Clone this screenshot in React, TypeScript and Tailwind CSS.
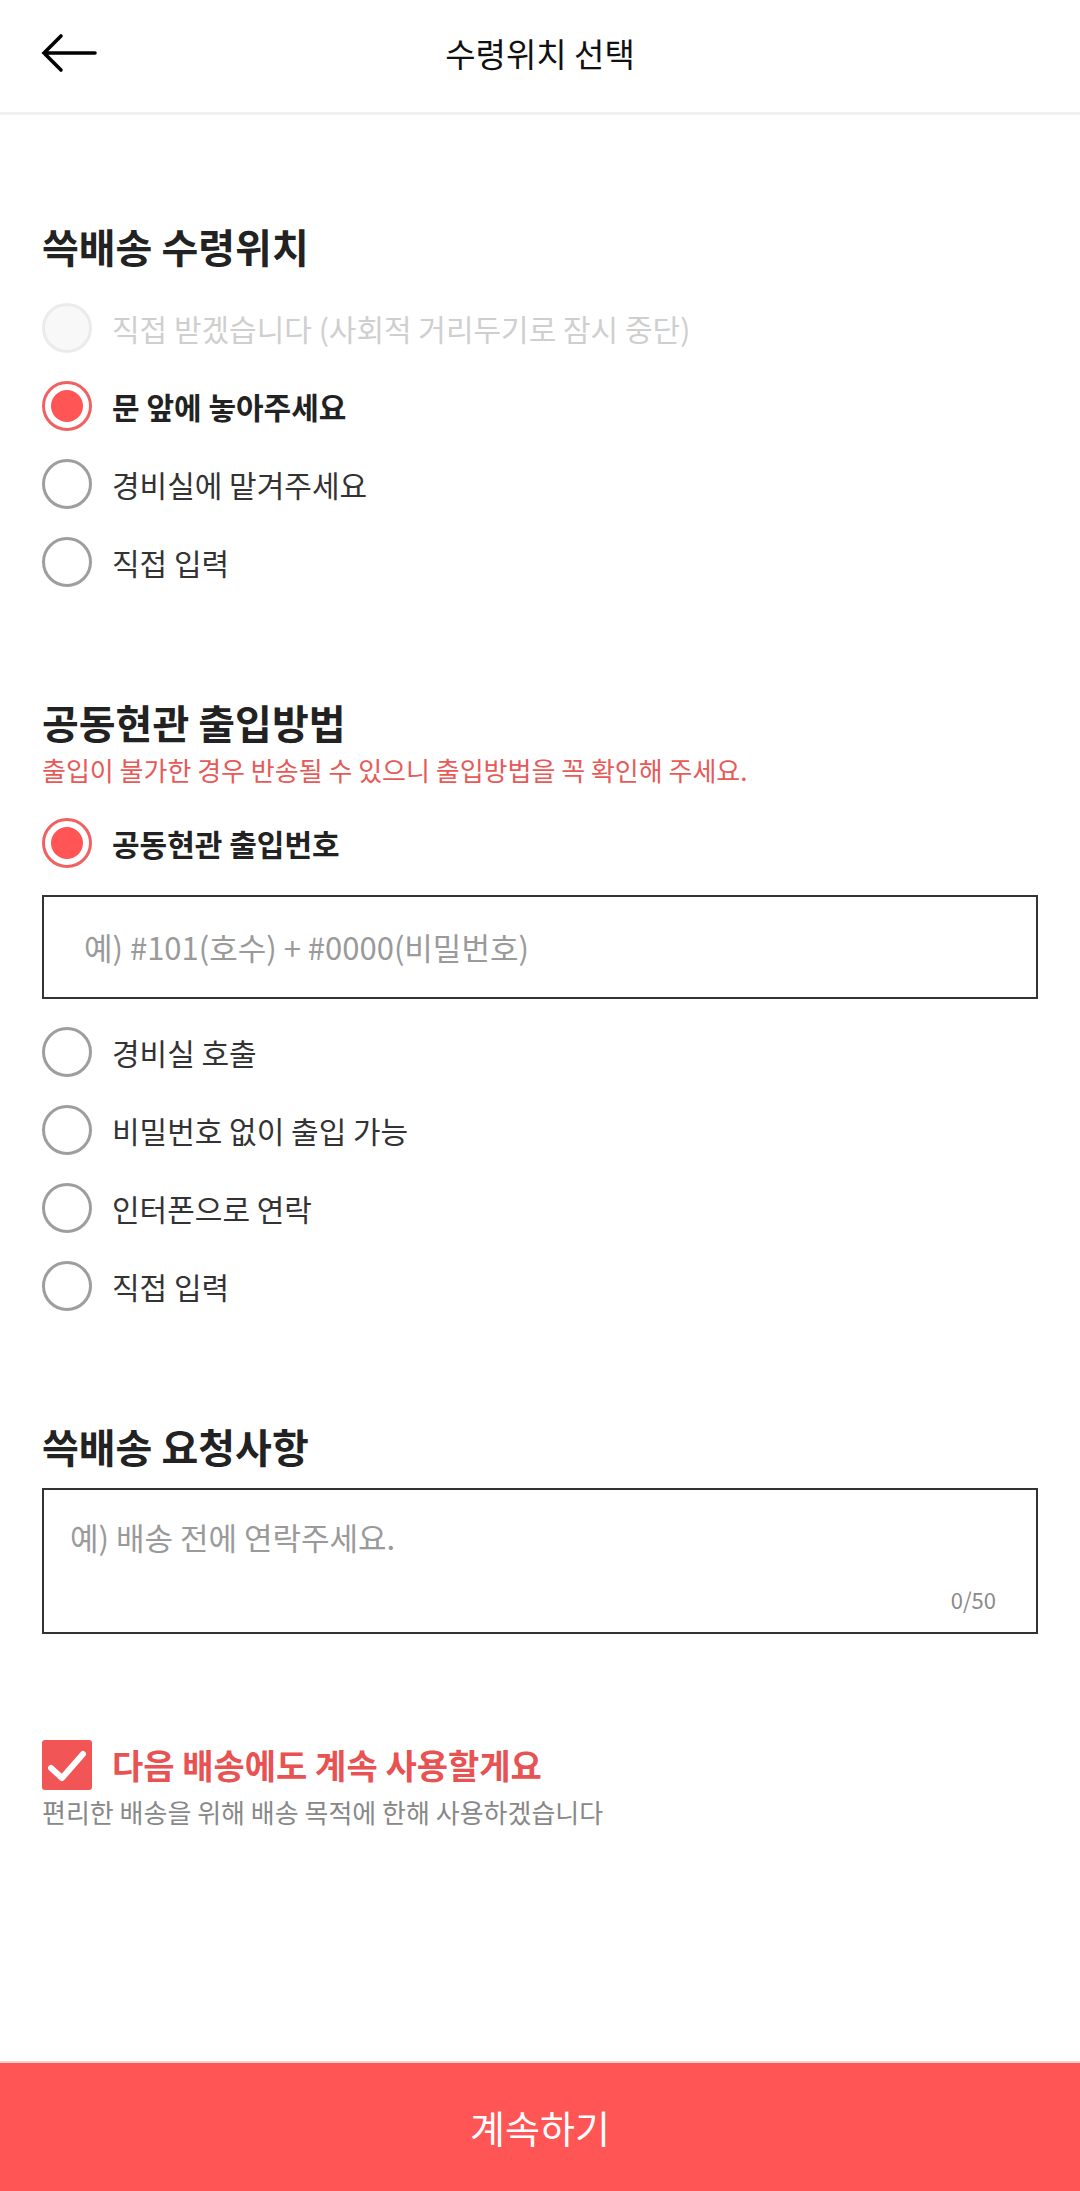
import React from "react";

type RadioState = "selected" | "unselected" | "disabled";

function Radio({ state }: { state: RadioState }) {
  if (state === "selected") {
    return (
      <span className="w-[50px] h-[50px] rounded-full border-[3px] border-[#f06262] flex items-center justify-center shrink-0">
        <span className="w-[32px] h-[32px] rounded-full bg-[#ff5555]" />
      </span>
    );
  }
  if (state === "disabled") {
    return <span className="w-[50px] h-[50px] rounded-full border-[3px] border-[#ebebeb] bg-[#f8f8f8] shrink-0" />;
  }
  return <span className="w-[50px] h-[50px] rounded-full border-[3px] border-[#9e9e9e] bg-white shrink-0" />;
}

function Option({ label, state }: { label: string; state: RadioState }) {
  const textCls =
    state === "selected"
      ? "text-[#222222] font-bold"
      : state === "disabled"
      ? "text-[#cfcfcf]"
      : "text-[#333333]";
  return (
    <div className="h-[78px] flex items-center gap-[20px]">
      <Radio state={state} />
      <span className={`text-[30px] leading-[42px] ${textCls}`}>{label}</span>
    </div>
  );
}

export default function App() {
  return (
    <div
      className="w-full min-h-[2191px] flex flex-col bg-white"
      style={{ fontFamily: '"Noto Sans CJK KR", "Noto Sans", sans-serif' }}
    >
      {/* Header */}
      <header className="relative h-[115px] flex items-center justify-center border-b-[3px] border-[#f1f1f1] shrink-0">
        <button className="absolute left-[40px] top-[33px] w-[58px] h-[40px] flex items-center justify-center">
          <svg width="58" height="40" viewBox="0 0 58 40" fill="none">
            <path d="M55 20 H4 M21 3 L4 20 L21 37" stroke="#000" strokeWidth="3.6" strokeLinecap="round" strokeLinejoin="miter" />
          </svg>
        </button>
        <h1 className="text-[33px] leading-[44px] text-[#111111] -mt-[6px]">수령위치 선택</h1>
      </header>

      <main className="flex-1 px-[42px]">
        {/* Section 1 */}
        <section className="pt-[107px]">
          <h2 className="text-[40px] leading-[48px] font-bold text-[#222222]">쓱배송 수령위치</h2>
          <div className="mt-[19px]">
            <Option state="disabled" label="직접 받겠습니다 (사회적 거리두기로 잠시 중단)" />
            <Option state="selected" label="문 앞에 놓아주세요" />
            <Option state="unselected" label="경비실에 맡겨주세요" />
            <Option state="unselected" label="직접 입력" />
          </div>
        </section>

        {/* Section 2 */}
        <section className="pt-[97px]">
          <h2 className="text-[40px] leading-[48px] font-bold text-[#222222]">공동현관 출입방법</h2>
          <p className="mt-[7px] text-[26px] leading-[34px] text-[#e65a58]">
            출입이 불가한 경우 반송될 수 있으니 출입방법을 꼭 확인해 주세요.
          </p>
          <div className="mt-[17px]">
            <Option state="selected" label="공동현관 출입번호" />
          </div>
          <div className="mt-[13px] h-[104px] border-[2px] border-[#333333] flex items-center pl-[40px]">
            <span className="text-[31px] leading-[42px] text-[#9a9a9a]">예) #101(호수) + #0000(비밀번호)</span>
          </div>
          <div className="mt-[14px]">
            <Option state="unselected" label="경비실 호출" />
            <Option state="unselected" label="비밀번호 없이 출입 가능" />
            <Option state="unselected" label="인터폰으로 연락" />
            <Option state="unselected" label="직접 입력" />
          </div>
        </section>

        {/* Section 3 */}
        <section className="pt-[97px]">
          <h2 className="text-[40px] leading-[48px] font-bold text-[#222222]">쓱배송 요청사항</h2>
          <div className="mt-[18px] h-[146px] border-[2px] border-[#333333] flex flex-col justify-between pl-[26px] pr-[40px] pt-[26px] pb-[18px]">
            <span className="text-[31px] leading-[42px] text-[#9a9a9a]">예) 배송 전에 연락주세요.</span>
            <span className="self-end text-[22px] leading-[30px] text-[#8a8a8a]">0/50</span>
          </div>
        </section>

        {/* Checkbox */}
        <section className="pt-[106px]">
          <div className="flex items-center gap-[20px] h-[50px]">
            <span className="w-[50px] h-[50px] rounded-[3px] bg-[#f25555] flex items-center justify-center shrink-0">
              <svg width="50" height="50" viewBox="0 0 50 50" fill="none">
                <path d="M9 28 L20 38 L41 14" stroke="#fff" strokeWidth="6" strokeLinecap="round" strokeLinejoin="round" />
              </svg>
            </span>
            <span className="text-[34px] leading-[46px] font-bold text-[#e85252]">다음 배송에도 계속 사용할게요</span>
          </div>
          <p className="mt-[5px] text-[26px] leading-[34px] text-[#888888]">
            편리한 배송을 위해 배송 목적에 한해 사용하겠습니다
          </p>
        </section>
      </main>

      {/* Bottom button */}
      <button className="h-[130px] w-full bg-[#ff5555] border-t-[2px] border-[#f7d0d0] flex items-center justify-center shrink-0 mt-[40px]">
        <span className="text-[38px] leading-[48px] text-white">계속하기</span>
      </button>
    </div>
  );
}
